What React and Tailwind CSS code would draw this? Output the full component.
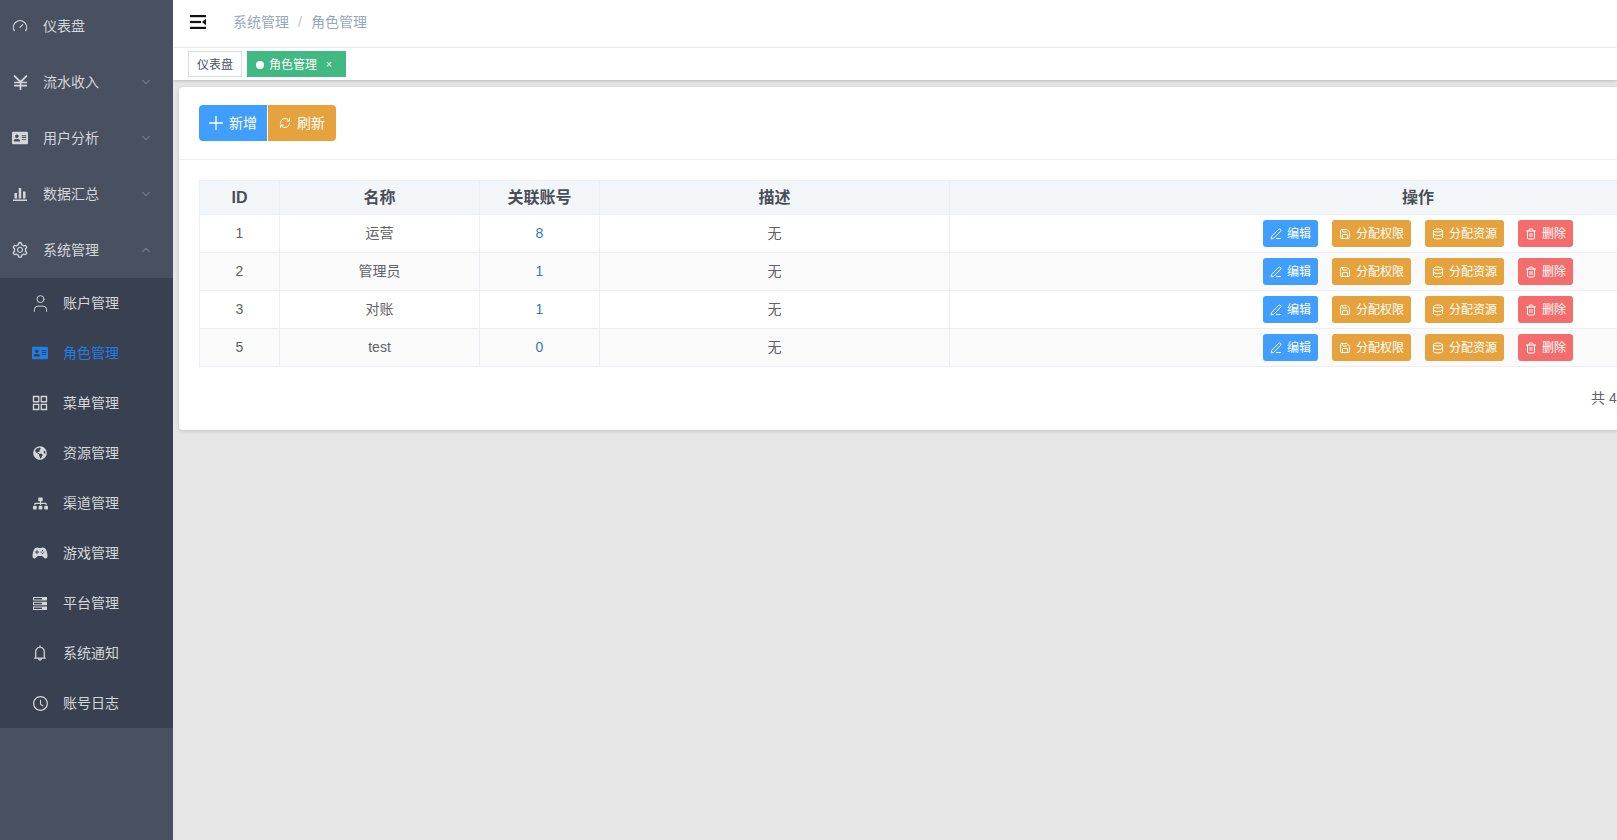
import { ChevronDown, ChevronUp, Plus, RefreshCw, Database, Trash2, Save, PenLine, Gauge, User } from "lucide-react"
import { FaAddressCard, FaGlobeAmericas, FaSitemap } from "react-icons/fa"
import { AiOutlineSetting, AiOutlineAppstore, AiOutlineBell, AiOutlineClockCircle } from "react-icons/ai"
import { IoGameController } from "react-icons/io5"

function YenIcon() {
  return (
    <svg width="15" height="15" viewBox="0 0 14 14" fill="none" stroke="currentColor" strokeWidth="1.6" className="shrink-0">
      <path d="M1 0.5 L7 6.5 L13 0.5 M7 6.5 V14 M1 7 H13 M1 10 H13" />
    </svg>
  )
}

function BarsIcon() {
  return (
    <svg width="14" height="14" viewBox="0 0 14 14" fill="currentColor" className="shrink-0">
      <rect x="0" y="12.5" width="14" height="1.5" />
      <rect x="1.5" y="6" width="2.5" height="5.5" />
      <rect x="5.7" y="1" width="2.5" height="10.5" />
      <rect x="10" y="4.5" width="2.5" height="7" />
    </svg>
  )
}

function ServerIcon() {
  return (
    <svg width="14" height="13" viewBox="0 0 14 13" fill="currentColor" className="shrink-0">
      <path d="M0 0h14v3.4H0z M1 1v1.4h8V1z" fillRule="evenodd" />
      <path d="M0 4.8h14v3.4H0z M1 5.8v1.4h8V5.8z" fillRule="evenodd" />
      <path d="M0 9.6h14V13H0z M1 10.6V12h8v-1.4z" fillRule="evenodd" />
    </svg>
  )
}

const topMenus = [
  { name: "仪表盘", icon: <Gauge size={16} strokeWidth={1.75} className="shrink-0" /> },
  { name: "流水收入", icon: <YenIcon />, arrow: "down" },
  { name: "用户分析", icon: <FaAddressCard size={16} className="shrink-0" />, arrow: "down" },
  { name: "数据汇总", icon: <BarsIcon />, arrow: "down" },
  { name: "系统管理", icon: <AiOutlineSetting size={18} className="shrink-0" />, arrow: "up" },
]

const subMenus = [
  { name: "账户管理", icon: <User size={21} strokeWidth={1.1} className="shrink-0" /> },
  { name: "角色管理", icon: <FaAddressCard size={16} className="shrink-0" />, active: true },
  { name: "菜单管理", icon: <AiOutlineAppstore size={20} className="shrink-0" /> },
  { name: "资源管理", icon: <FaGlobeAmericas size={14} className="shrink-0" /> },
  { name: "渠道管理", icon: <FaSitemap size={15} className="shrink-0" /> },
  { name: "游戏管理", icon: <IoGameController size={16} className="shrink-0" /> },
  { name: "平台管理", icon: <ServerIcon /> },
  { name: "系统通知", icon: <AiOutlineBell size={18} className="shrink-0" /> },
  { name: "账号日志", icon: <AiOutlineClockCircle size={17} className="shrink-0" /> },
]

const roles = [
  { id: 1, name: "运营", count: 8, desc: "无" },
  { id: 2, name: "管理员", count: 1, desc: "无" },
  { id: 3, name: "对账", count: 1, desc: "无" },
  { id: 5, name: "test", count: 0, desc: "无" },
]

function ActionButton({ color, width, icon, label }) {
  return (
    <button className={`flex h-[27px] items-center justify-center gap-[5px] rounded-[3px] text-xs text-white ${color} ${width}`}>
      {icon}
      <span className="pt-px">{label}</span>
    </button>
  )
}

function Sidebar() {
  return (
    <aside className="w-[173px] shrink-0 overflow-hidden bg-[#495060] text-sm text-[#d3d6db]">
      <div className="mt-[-2px]">
        {topMenus.map(item => (
          <div key={item.name} className="flex h-[56px] items-center pl-[12px] pr-[20px]">
            <span className="flex w-[31px] items-center">
              <span className="flex w-[16px] justify-center">{item.icon}</span>
            </span>
            <span className="flex-1">{item.name}</span>
            {item.arrow === "down" && <ChevronDown size={14} className="text-[#6e7686]" />}
            {item.arrow === "up" && <ChevronUp size={14} className="text-[#6e7686]" />}
          </div>
        ))}
      </div>
      <div className="bg-[#39404f]">
        {subMenus.map(item => (
          <div
            key={item.name}
            className={`flex h-[50px] items-center pl-[32px] ${item.active ? "text-[#1f7de6]" : ""}`}
          >
            <span className="flex w-[31px] items-center">
              <span className="flex w-[16px] justify-center">{item.icon}</span>
            </span>
            <span>{item.name}</span>
          </div>
        ))}
      </div>
    </aside>
  )
}

function Header() {
  return (
    <>
      <div className="flex h-[48px] items-center border-b border-[#f2f2f2] bg-white pb-[4px] pl-[17px]">
        <svg width="16" height="14" viewBox="0 0 16 14" className="text-[#111]" fill="currentColor">
          <rect x="0" y="0" width="16" height="2.2" />
          <rect x="0" y="5.9" width="11" height="2.2" />
          <rect x="0" y="11.8" width="16" height="2.2" />
          <path d="M16 3.8 L12 7 L16 10.2 Z" />
        </svg>
        <div className="ml-[27px] flex text-sm text-[#97a8be]">
          <span>系统管理</span>
          <span className="mx-[9px] text-[#c0c4cc]">/</span>
          <span>角色管理</span>
        </div>
      </div>
      <div className="relative z-10 flex h-[32px] items-start gap-[5px] bg-white pl-[15px] pt-[3px] shadow-[0_1px_3px_0_rgba(0,0,0,0.2)]">
        <div className="flex h-[26px] w-[54px] items-center justify-center border border-[#d8dce5] pt-px text-xs text-[#495060]">
          仪表盘
        </div>
        <div className="flex h-[26px] w-[99px] items-center bg-[#42b983] pl-[9px] pt-px text-xs text-white">
          <span className="h-[8px] w-[8px] rounded-full bg-white" />
          <span className="ml-[5px]">角色管理</span>
          <span className="ml-[9px] text-[10px]">×</span>
        </div>
      </div>
    </>
  )
}

function RoleTable() {
  return (
    <table className="w-[1688px] table-fixed border-collapse text-sm text-[#606266]">
      <colgroup>
        <col className="w-[80px]" />
        <col className="w-[200px]" />
        <col className="w-[120px]" />
        <col className="w-[350px]" />
        <col />
      </colgroup>
      <thead>
        <tr className="h-[34px] bg-[#f3f6f9] text-base font-bold text-[#4a4f57]">
          <th className="border border-[#ebeef5]">ID</th>
          <th className="border border-[#ebeef5]">名称</th>
          <th className="border border-[#ebeef5]">关联账号</th>
          <th className="border border-[#ebeef5]">描述</th>
          <th className="border border-[#ebeef5]">操作</th>
        </tr>
      </thead>
      <tbody>
        {roles.map((role, index) => (
          <tr key={role.id} className={`h-[38px] text-center ${index % 2 === 1 ? "bg-[#fafafa]" : "bg-white"}`}>
            <td className="border border-[#ebeef5] pb-px">{role.id}</td>
            <td className="border border-[#ebeef5] pb-px">{role.name}</td>
            <td className="border border-[#ebeef5] pb-px text-[#337ab7]">{role.count}</td>
            <td className="border border-[#ebeef5] pb-px">{role.desc}</td>
            <td className="border border-[#ebeef5]">
              <div className="flex justify-center gap-[14px]">
                <ActionButton color="bg-[#409eff]" width="w-[55px]" icon={<PenLine size={12} />} label="编辑" />
                <ActionButton color="bg-[#e6a23c]" width="w-[79px]" icon={<Save size={12} />} label="分配权限" />
                <ActionButton color="bg-[#e6a23c]" width="w-[79px]" icon={<Database size={12} />} label="分配资源" />
                <ActionButton color="bg-[#f56c6c]" width="w-[55px]" icon={<Trash2 size={12} />} label="删除" />
              </div>
            </td>
          </tr>
        ))}
      </tbody>
    </table>
  )
}

export default function App() {
  return (
    <div className="flex h-screen w-screen overflow-hidden bg-[#e6e6e6] font-['Liberation_Sans','Noto_Sans_CJK_SC',sans-serif]">
      <Sidebar />
      <main className="min-w-0 flex-1 overflow-hidden">
        <Header />
        <div className="ml-[6px] mt-[7px] w-[1728px] rounded-[4px] bg-white shadow-[0_1px_4px_rgba(0,0,0,0.15)]">
          <div className="flex h-[73px] items-center border-b border-[#ebeef5] px-[20px] pb-px">
            <button className="flex h-[36px] w-[68px] items-center justify-center gap-[6px] rounded-l-[4px] bg-[#409eff] text-sm text-white">
              <Plus size={22} strokeWidth={1.5} className="-mx-1" />
              <span>新增</span>
            </button>
            <button className="ml-px flex h-[36px] w-[68px] items-center justify-center gap-[6px] rounded-r-[4px] bg-[#e6a23c] text-sm text-white">
              <RefreshCw size={12} />
              <span>刷新</span>
            </button>
          </div>
          <div className="px-[20px] pt-[20px]">
            <RoleTable />
          </div>
          <div className="h-[63px] pl-[1412px] pt-[21px] text-sm text-[#606266]">共 4 条</div>
        </div>
      </main>
    </div>
  )
}
